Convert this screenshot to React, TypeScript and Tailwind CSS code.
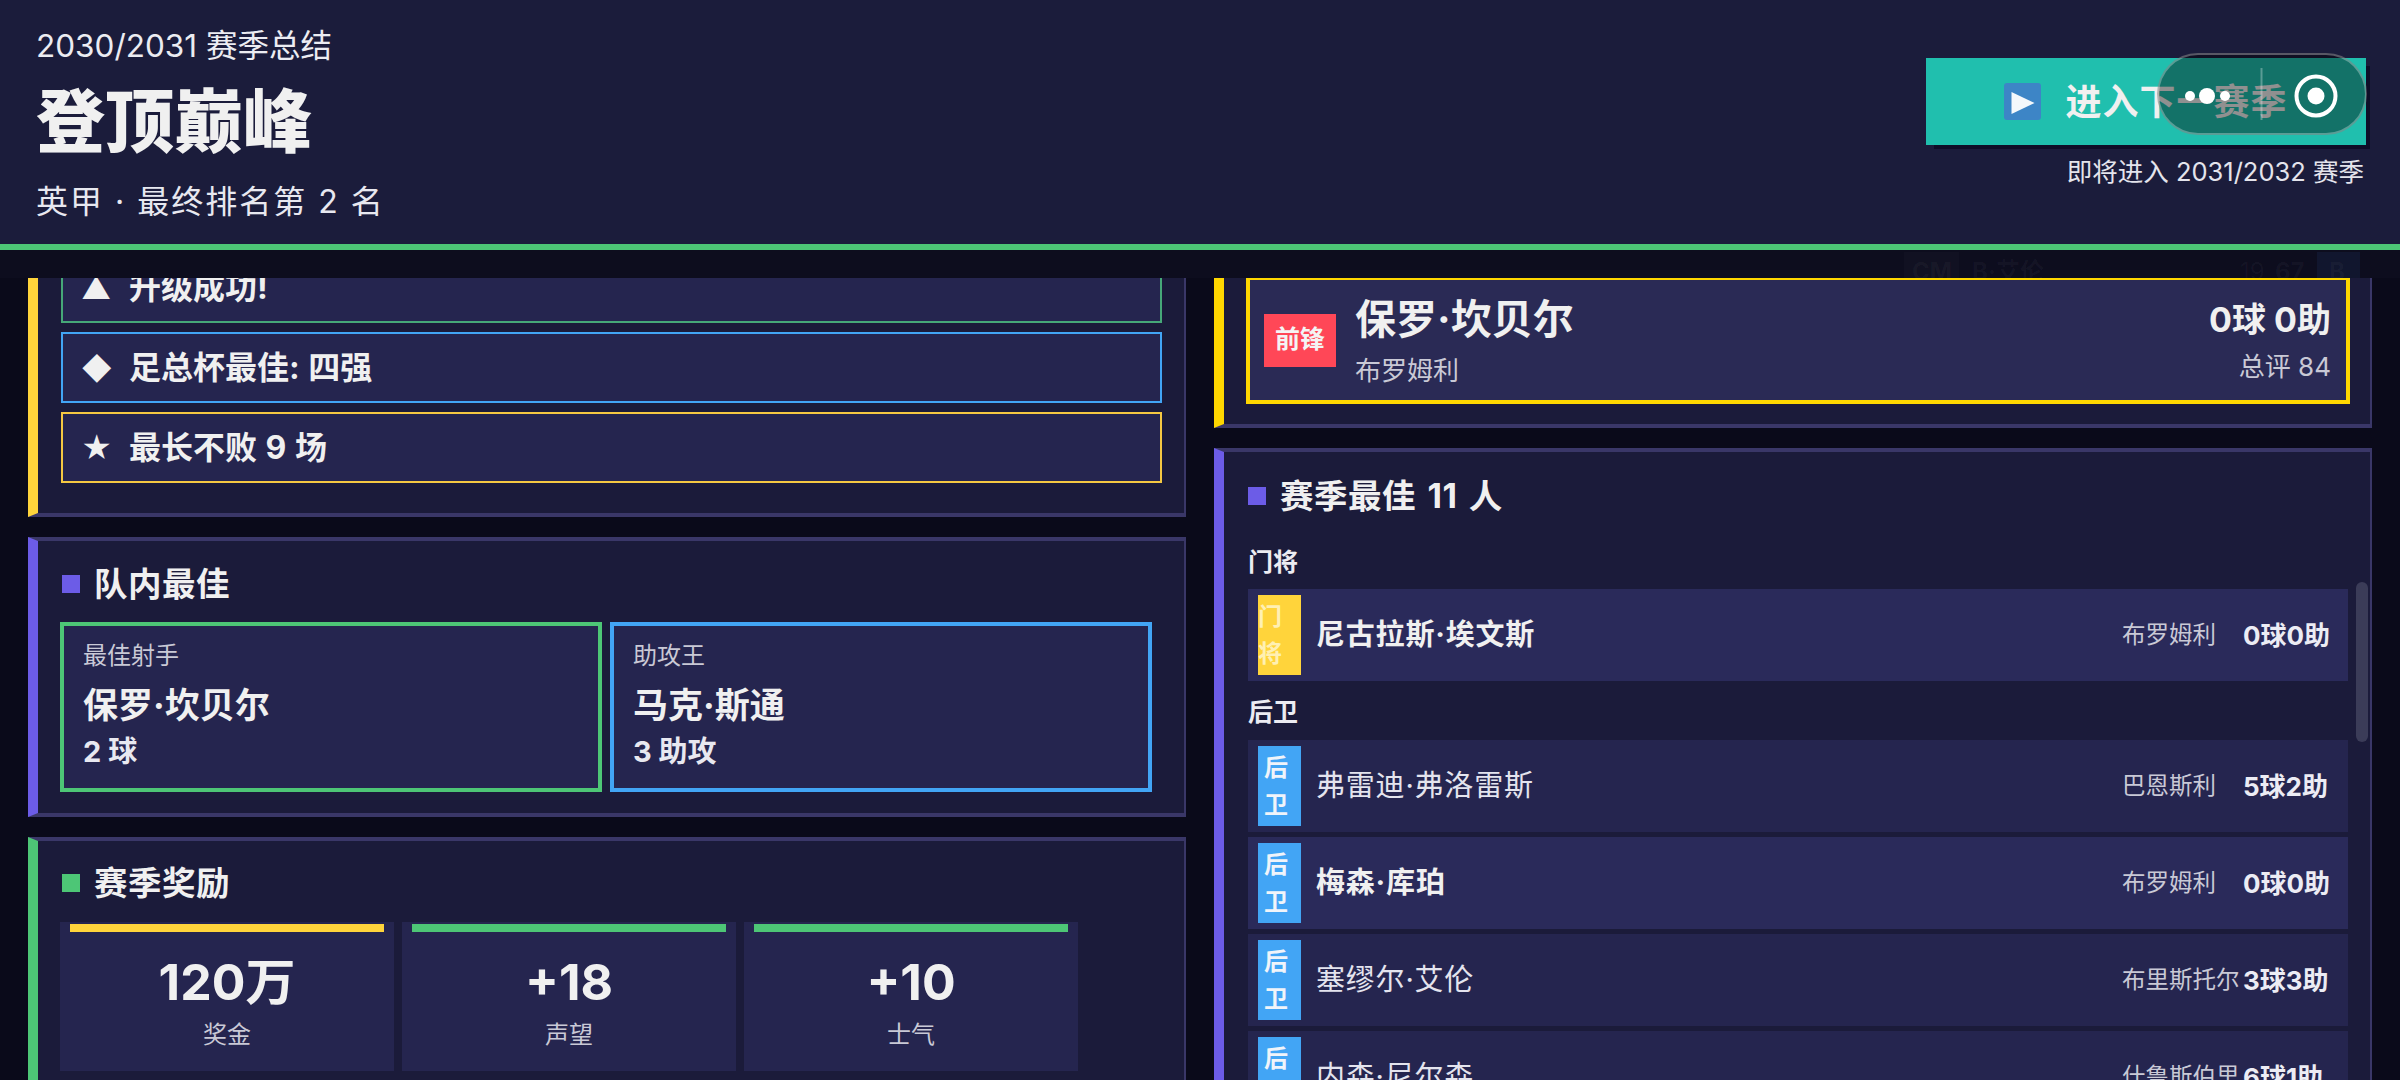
import React from "react";

function Card({ bar, top = "border-t-4", children, className = "" }: { bar: string; top?: string; children: React.ReactNode; className?: string }) {
  return (
    <section className={`${top} border-b-4 border-r-2 border-l-[10px] border-t-[#3a3768] border-b-[#3a3768] border-r-[#3a3768] bg-[#1b1b3a] ${bar} ${className}`}>
      {children}
    </section>
  );
}

function Title({ color, children }: { color: string; children: React.ReactNode }) {
  return (
    <div className="flex h-12 items-center">
      <span className={`h-[18px] w-[18px] shrink-0 ${color}`} />
      <h2 className="ml-[14px] text-[33.5px] leading-[48px] font-bold tracking-[0.5px] [word-spacing:3px] text-[#f0f0f0]">{children}</h2>
    </div>
  );
}

function Note({ border, icon, children, className = "" }: { border: string; icon: string; children: React.ReactNode; className?: string }) {
  return (
    <div className={`flex h-[71px] items-center border-2 bg-[#25254f] pl-[18px] ${border} ${className}`}>
      <span className="w-[26px] text-center text-[30px] leading-none text-[#f0f0f0]">{icon}</span>
      <span className="ml-[22px] text-[32px] font-bold [word-spacing:1px] text-[#f0f0f0]">{children}</span>
    </div>
  );
}

function Best({ border, label, name, value }: { border: string; label: string; name: string; value: string }) {
  return (
    <div className={`h-[170px] w-[542px] border-4 bg-[#25254f] pl-[19px] pt-3 ${border}`}>
      <div className="text-[24px] leading-9 text-[#c9c9d6]">{label}</div>
      <div className="mt-[9px] text-[35px] leading-[44px] font-bold text-[#f0f0f0]">{name}</div>
      <div className="mt-[7px] text-[29px] leading-9 font-bold text-[#e8e8f0]">{value}</div>
    </div>
  );
}

function Reward({ bar, value, label }: { bar: string; value: string; label: string }) {
  return (
    <div className="h-[149px] w-[334px] bg-[#25254f] px-[10px] pt-[2px] text-center">
      <div className={`h-2 ${bar}`} />
      <div className="mt-5 text-[50px] leading-[60px] font-bold text-[#f0f0f0]">{value}</div>
      <div className="mt-[5px] text-[24px] leading-9 text-[#c9c9d6]">{label}</div>
    </div>
  );
}

type P = { pos: string; name: string; team: string; stat: string; hi?: boolean; gk?: boolean };

function PlayerRow({ pos, name, team, stat, hi, gk }: P) {
  return (
    <div className={`flex h-[92px] w-[1100px] items-center pl-[10px] ${hi ? "bg-[#2a2a5a]" : "bg-[#25254f]"}`}>
      <div className={`h-20 w-[43px] shrink-0 pt-[3px] text-[24px] leading-[37px] font-bold ${gk ? "bg-[#ffd43b] text-[#fff0b3]" : "bg-[#42a5f5] pl-[6px] text-[#f0f4fa]"}`}>{pos}</div>
      <div className={`ml-[15px] flex-1 text-[29px] tracking-[0.8px] ${hi ? "font-bold text-[#f0f0f0]" : "text-[#e4e4ee]"}`}>{name}</div>
      <div className="w-[122px] shrink-0 overflow-hidden text-[23.5px] whitespace-nowrap text-[#c9c9d6]">{team}</div>
      <div className="w-[104px] shrink-0 -translate-x-[1px] text-[26px] font-bold text-[#ececf4]">{stat}</div>
    </div>
  );
}

export default function App() {
  return (
    <div className="flex h-[1080px] w-[2400px] flex-col overflow-hidden bg-[#0a0a1a] font-[Inter,'Noto_Sans_CJK_SC',sans-serif]">
      <header className="flex h-[250px] shrink-0 items-start justify-between border-b-[6px] border-[#4dc676] bg-[#1b1c3b] pl-[36px] pr-[34px]">
        <div>
          <div className="mt-[26px] text-[31.5px] leading-[40px] text-[#ececf2]">2030/2031 赛季总结</div>
          <h1 className="mt-[11px] text-[69px] leading-[90px] font-black text-[#f0f0f0]">登顶巅峰</h1>
          <div className="mt-[11px] text-[32px] leading-[48px] tracking-[2px] text-[#e8e8f0]">英甲 · 最终排名第 2 名</div>
        </div>
        <div className="relative mt-[58px] flex flex-col items-end">
          <button className="flex h-[87px] w-[440px] items-center justify-center bg-[#20bfae] text-[36px] font-bold tracking-[1px] text-[#f0f0f0] shadow-[6px_6px_0_-2px_#0e0e28]">
            <svg width="37" height="37" viewBox="0 0 37 37" className="mr-6 shrink-0">
              <rect width="37" height="37" rx="3" fill="#3d85c6" />
              <path d="M7.5 9 L30.5 20 L7.5 31 Z" fill="#f4f8fb" />
            </svg>
            进入下一赛季
          </button>
          <div className="mt-[8px] mr-[2px] text-[25.5px] leading-[38px] text-[#e4e4ec]">即将进入 2031/2032 赛季</div>
          <div className="absolute -top-[5px] left-[231px] flex h-[82px] w-[210px] items-center rounded-full border-2 border-white/30 bg-black/40">
            <svg width="206" height="78" viewBox="0 0 206 78" fill="none">
              <circle cx="31" cy="41" r="5" fill="#fff" />
              <circle cx="48" cy="41" r="8" fill="#fff" />
              <circle cx="66" cy="41" r="5" fill="#fff" />
              <line x1="102.5" y1="13" x2="102.5" y2="65" stroke="#fff" strokeOpacity="0.3" strokeWidth="2" />
              <circle cx="157" cy="41" r="19.5" stroke="#fff" strokeWidth="4" />
              <circle cx="157" cy="41" r="8.5" fill="#fff" />
            </svg>
          </div>
        </div>
      </header>

      <div className="relative h-7 shrink-0 overflow-hidden bg-[#0d0d1e] text-[24px] font-bold text-white/[0.04]">
        <span className="absolute left-[1904px] top-[2px] w-[55px] bg-white/[0.02] pl-2 pt-[2px]">CM</span>
        <span className="absolute left-[1972px] top-[4px]">B·艾伦</span>
        <span className="absolute left-[2240px] top-[4px] font-normal">19</span>
        <span className="absolute left-[2275px] top-[4px]">67</span>
        <span className="absolute left-[2317px] top-[2px] w-[43px] bg-[#1a2a55]/30 pl-3 pt-[2px]">B</span>
      </div>

      <main className="grid min-h-0 flex-1 grid-cols-2 gap-7 overflow-hidden px-7">
        <div className="flex flex-col gap-5">
          <Card bar="border-l-[#ffd43b]" top="border-t-0" className="pb-[30px] pl-[23px] pr-[22px]">
            <div className="flex flex-col gap-[9px]">
              <Note border="border-[#46a878]" icon="▲" className="-mt-[26px]">升级成功!</Note>
              <Note border="border-[#42a5f5]" icon="◆">足总杯最佳: 四强</Note>
              <Note border="border-[#f5c842]" icon="★">最长不败 9 场</Note>
            </div>
          </Card>
          <Card bar="border-l-[#6c5ce7]" className="pb-[21px] pl-[22px] pt-[19px]">
            <div className="pl-[2px]"><Title color="bg-[#6c5ce7]">队内最佳</Title></div>
            <div className="mt-[14px] flex gap-2">
              <Best border="border-[#4dc676]" label="最佳射手" name="保罗·坎贝尔" value="2 球" />
              <Best border="border-[#42a5f5]" label="助攻王" name="马克·斯通" value="3 助攻" />
            </div>
          </Card>
          <Card bar="border-l-[#4dc676]" className="pl-[22px] pt-[18px]">
            <div className="pl-[2px]"><Title color="bg-[#4dc676]">赛季奖励</Title></div>
            <div className="mt-[15px] flex gap-2 pb-6">
              <Reward bar="bg-[#ffd43b]" value="120万" label="奖金" />
              <Reward bar="bg-[#4dc676]" value="+18" label="声望" />
              <Reward bar="bg-[#4dc676]" value="+10" label="士气" />
            </div>
          </Card>
        </div>

        <div className="flex flex-col gap-5">
          <Card bar="border-l-[#ffd700]" top="border-t-0" className="pb-5 pl-[22px] pr-5">
            <div className="-mt-[2px] flex h-[128px] items-center border-4 border-[#ffd700] bg-[#2a2a55] pl-[14px] pr-[15px]">
              <div className="flex h-[53px] w-[72px] shrink-0 items-center justify-center bg-[#ff4757] text-[25px] font-bold text-[#f4f4f4]">前锋</div>
              <div className="ml-[19px] flex-1 pt-[2px]">
                <div className="text-[41px] leading-[50px] font-bold text-[#f0f0f0]">保罗·坎贝尔</div>
                <div className="mt-[9px] text-[26px] leading-9 text-[#c9c9d6]">布罗姆利</div>
              </div>
              <div className="text-right">
                <div className="text-[34px] leading-[50px] font-bold text-[#f0f0f0]">0球 0助</div>
                <div className="mt-[4px] text-[26px] leading-9 text-[#c9c9d6]">总评 84</div>
              </div>
            </div>
          </Card>
          <Card bar="border-l-[#6c5ce7]" className="relative pl-6 pt-[20px]">
            <Title color="bg-[#6c5ce7]">赛季最佳 11 人</Title>
            <div className="mt-[24px] text-[25px] leading-9 font-bold text-[#ececf2]">门将</div>
            <div className="mt-[9px]">
              <PlayerRow gk hi pos="门将" name="尼古拉斯·埃文斯" team="布罗姆利" stat="0球0助" />
            </div>
            <div className="mt-[13px] text-[25px] leading-9 font-bold text-[#ececf2]">后卫</div>
            <div className="mt-[10px] flex flex-col gap-[5px]">
              <PlayerRow pos="后卫" name="弗雷迪·弗洛雷斯" team="巴恩斯利" stat="5球2助" />
              <PlayerRow hi pos="后卫" name="梅森·库珀" team="布罗姆利" stat="0球0助" />
              <PlayerRow pos="后卫" name="塞缪尔·艾伦" team="布里斯托尔" stat="3球3助" />
              <PlayerRow pos="后卫" name="内森·尼尔森" team="什鲁斯伯里" stat="6球1助" />
            </div>
            <div className="absolute right-[2px] top-[130px] h-[160px] w-3 rounded-md bg-[#3b3c58]" />
          </Card>
        </div>
      </main>
    </div>
  );
}
